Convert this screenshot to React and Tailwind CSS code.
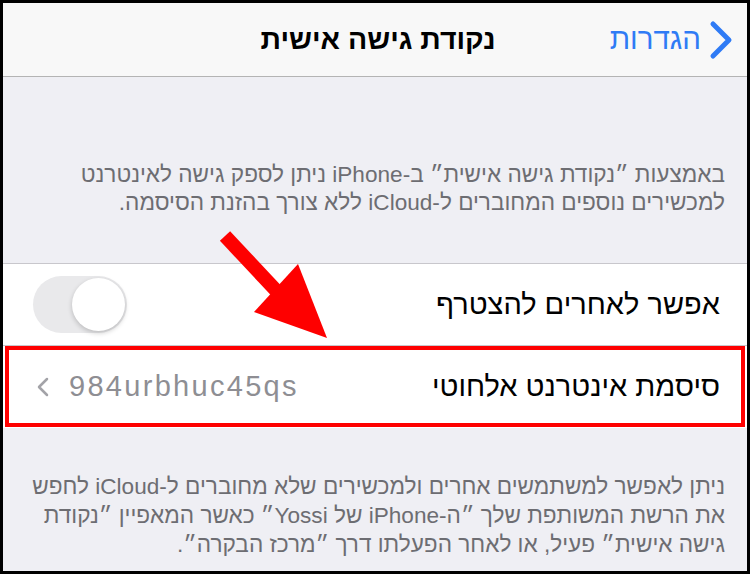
const font = { fontFamily: '"Liberation Sans", "DejaVu Sans", sans-serif' }

const Toggle = () => (
  <div className="w-[94px] h-[57px] rounded-full bg-[#e9e9eb] p-[2px] flex justify-start">
    <div className="w-[53px] h-[53px] rounded-full bg-white shadow-[0_2px_5px_rgba(0,0,0,0.2)]" />
  </div>
)

const Arrow = () => (
  <svg className="absolute left-[200px] top-[220px] pointer-events-none" width="140" height="130" viewBox="200 220 140 130">
    <line x1="225" y1="236" x2="285" y2="300" stroke="#fe0000" strokeWidth="14" />
    <polygon points="298,264 254,312 327,338" fill="#fe0000" />
  </svg>
)

export default function App() {
  return (
    <div dir="rtl" className="relative w-[750px] h-[574px] bg-black p-[3px] overflow-hidden" style={font}>
      <div className="w-full h-full bg-[#efeff4] flex flex-col">
        <div className="h-[74px] bg-[#f8f8f8] border-b border-[#b4b4b4] grid grid-cols-[1fr_auto_1fr] items-center">
          <div className="flex items-center gap-[8px] pr-[12px] text-[#2f7bf5]">
            <svg width="26" height="40" viewBox="0 0 26 40">
              <polyline points="4,4 20,20 4,36" fill="none" stroke="#2f7bf5" strokeWidth="5" strokeLinecap="round" strokeLinejoin="round" />
            </svg>
            <span className="text-[29.5px]">הגדרות</span>
          </div>
          <h1 className="text-[28.5px] font-bold text-black pl-[6px]">נקודת גישה אישית</h1>
          <div />
        </div>

        <div className="pt-[84px] pb-[46px] pr-[22px] pl-[6px] text-[22.6px] leading-[28px] text-[#6d6d72]">
          <p>באמצעות ״נקודת גישה אישית״ ב-iPhone ניתן לספק גישה לאינטרנט</p>
          <p>למכשירים נוספים המחוברים ל-iCloud ללא צורך בהזנת הסיסמה.</p>
        </div>

        <div className="bg-white border-t border-[#c8c7cc]">
          <div className="h-[82px] flex items-center justify-between pr-[27px] pl-[30px] border-b border-[#c8c7cc]">
            <span className="text-[29px] text-black">אפשר לאחרים להצטרף</span>
            <Toggle />
          </div>
          <div className="relative h-[82px] flex items-center justify-between pr-[27px] pl-[34px]">
            <span className="text-[29px] text-black">סיסמת אינטרנט אלחוטי</span>
            <div className="flex items-center gap-[20px]">
              <span className="text-[29px] tracking-[2.3px] text-[#8e8e93]">984urbhuc45qs</span>
              <svg width="12" height="20" viewBox="0 0 12 20">
                <polyline points="10,2 2,10 10,18" fill="none" stroke="#a3a3a8" strokeWidth="2.5" strokeLinecap="round" strokeLinejoin="round" />
              </svg>
            </div>
            <div className="absolute left-[2px] right-[2px] top-0 bottom-[1px] border-4 border-[#fe0000] pointer-events-none" />
          </div>
        </div>

        <div className="pt-[44px] pr-[22px] pl-[6px] text-[22.6px] leading-[29px] text-[#6d6d72]">
          <p>ניתן לאפשר למשתמשים אחרים ולמכשירים שלא מחוברים ל-iCloud לחפש</p>
          <p>את הרשת המשותפת שלך ״ה-iPhone של Yossi״ כאשר המאפיין ״נקודת</p>
          <p>גישה אישית״ פעיל, או לאחר הפעלתו דרך ״מרכז הבקרה״.</p>
        </div>
      </div>
      <Arrow />
    </div>
  )
}
